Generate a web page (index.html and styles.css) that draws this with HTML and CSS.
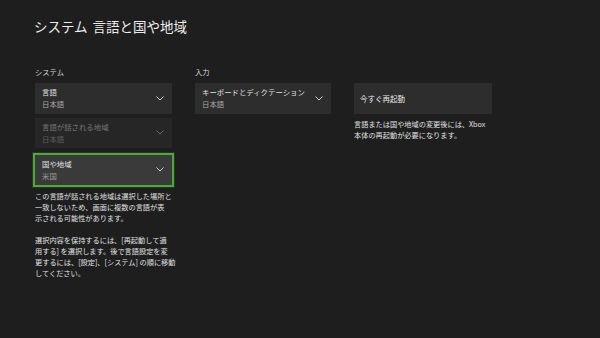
FILE: index.html
```html
<!DOCTYPE html>
<html lang="ja">
<head>
  <meta charset="UTF-8">
  <title>言語と国や地域</title>
  <link rel="stylesheet" href="styles.css">
</head>
<body>
  <h1 class="page-title">システム 言語と国や地域</h1>

  <div class="columns">
    <section class="column">
      <h2 class="section-title">システム</h2>

      <div class="picker">
        <div class="picker-text">
          <div class="picker-label">言語</div>
          <div class="picker-value">日本語</div>
        </div>
        <svg class="chevron" width="8" height="5" viewBox="0 0 8 5"><polyline points="0.5,0.5 4,4 7.5,0.5" /></svg>
      </div>

      <div class="picker disabled">
        <div class="picker-text">
          <div class="picker-label">言語が話される地域</div>
          <div class="picker-value">日本語</div>
        </div>
        <svg class="chevron" width="8" height="5" viewBox="0 0 8 5"><polyline points="0.5,0.5 4,4 7.5,0.5" /></svg>
      </div>

      <div class="picker focused">
        <div class="picker-text">
          <div class="picker-label">国や地域</div>
          <div class="picker-value">米国</div>
        </div>
        <svg class="chevron" width="8" height="5" viewBox="0 0 8 5"><polyline points="0.5,0.5 4,4 7.5,0.5" /></svg>
      </div>

      <p class="note">この言語が話される地域は選択した場所と<br>一致しないため、画面に複数の言語が表<br>示される可能性があります。</p>
      <p class="note">選択内容を保持するには、[再起動して適<br>用する] を選択します。後で言語設定を変<br>更するには、[設定]、[システム] の順に移動<br>してください。</p>
    </section>

    <section class="column">
      <h2 class="section-title">入力</h2>

      <div class="picker">
        <div class="picker-text">
          <div class="picker-label">キーボードとディクテーション</div>
          <div class="picker-value">日本語</div>
        </div>
        <svg class="chevron" width="8" height="5" viewBox="0 0 8 5"><polyline points="0.5,0.5 4,4 7.5,0.5" /></svg>
      </div>
    </section>

    <section class="column">
      <h2 class="section-title">&nbsp;</h2>

      <button class="action-button">今すぐ再起動</button>

      <p class="note">言語または国や地域の変更後には、Xbox<br>本体の再起動が必要になります。</p>
    </section>
  </div>
</body>
</html>
```

FILE: styles.css
```css
body {
  margin: 0;
  background-color: #1e1e1e;
  color: #e4e4e4;
  font-family: "Noto Sans CJK JP", "Noto Sans", sans-serif;
}
.page-title {
  font-size: 13.5px;
  font-weight: normal;
  margin: 0;
  padding: 16px 0 0 34px;
  line-height: 20px;
  word-spacing: 2px;
  color: #ececec;
}
.columns {
  display: grid;
  grid-template-columns: 137px 136px 138px;
  column-gap: 23px;
  padding: 31px 0 0 35px;
}
.section-title {
  font-size: 7.3px;
  font-weight: normal;
  margin: 0 0 6px 0;
  line-height: 10px;
  color: #d8d8d8;
}
.picker {
  display: flex;
  align-items: center;
  justify-content: space-between;
  height: 31px;
  box-sizing: border-box;
  padding: 3px 8px 4px 7px;
  margin-bottom: 4px;
  background-color: #2d2d2d;
}
.picker-label {
  font-size: 7.4px;
  line-height: 12px;
  color: #e2e2e2;
}
.picker-value {
  font-size: 7.4px;
  line-height: 12px;
  color: #a8a8a8;
}
.chevron {
  fill: none;
  stroke: #cfcfcf;
  stroke-width: 1;
}
.disabled {
  background-color: #262626;
  height: 30px;
}
.disabled .picker-label {
  color: #767676;
}
.disabled .picker-value {
  color: #606060;
}
.disabled .chevron {
  stroke: #666;
}
.focused {
  margin-top: 7px;
  height: 30px;
  background-color: #3a3a3a;
  outline: 2px solid #4caa3a;
  box-shadow: 0 0 0 3px #213a1c;
}
.focused .picker-value {
  color: #9a9a9a;
}
.note {
  font-size: 7.2px;
  line-height: 11px;
  margin: 0 0 11px 0;
  color: #e0e0e0;
  white-space: nowrap;
}
.focused + .note {
  margin-top: 6px;
}
.action-button {
  display: block;
  width: 100%;
  height: 31px;
  border: none;
  padding: 0 0 0 6px;
  text-align: left;
  font-family: inherit;
  font-size: 7.5px;
  color: #e8e8e8;
  background-color: #2d2d2d;
  margin-bottom: 5px;
}
```
